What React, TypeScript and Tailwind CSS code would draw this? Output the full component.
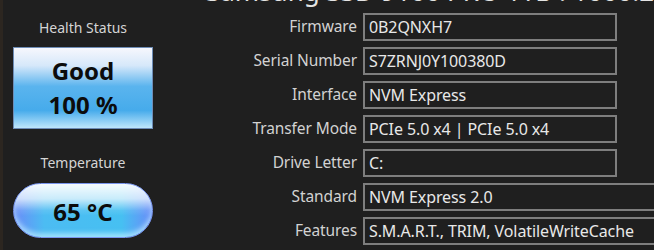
const rows = [
  { label: 'Firmware', value: '0B2QNXH7', wide: false },
  { label: 'Serial Number', value: 'S7ZRNJ0Y100380D', wide: false },
  { label: 'Interface', value: 'NVM Express', wide: false },
  { label: 'Transfer Mode', value: 'PCIe 5.0 x4 | PCIe 5.0 x4', wide: false },
  { label: 'Drive Letter', value: 'C:', wide: false },
  { label: 'Standard', value: 'NVM Express 2.0', wide: true },
  { label: 'Features', value: 'S.M.A.R.T., TRIM, VolatileWriteCache', wide: true },
];

function InfoRow({ label, value, wide }: { label: string; value: string; wide: boolean }) {
  return (
    <div className="flex h-[28px] items-center">
      <div className="w-[193px] pr-[6px] text-right text-[15.5px] tracking-[-0.1px] text-[#d2d2d2]">{label}</div>
      <div
        className={
          'flex h-[28px] shrink-0 items-center border-2 border-[#7e7e7e] px-[4px] text-[16px] tracking-[-0.1px] text-[#e8e8e8] ' +
          (wide ? 'w-[330px]' : 'w-[254px]')
        }
      >
        {value}
      </div>
    </div>
  );
}

export default function App() {
  return (
    <div
      className="flex h-[250px] w-[654px] overflow-hidden bg-[#1f1f1f]"
      style={{ fontFamily: '"Noto Sans", "Open Sans", sans-serif' }}
    >
      <div className="w-[3px] shrink-0 bg-[#2c2620]" />
      <div className="flex min-w-0 flex-1 flex-col">
        <div className="h-[13px] shrink-0 overflow-hidden">
          <div className="-mt-[24px] pl-[203px] text-[26px] leading-[30px] whitespace-nowrap text-[#e4e4e4]">
            Samsung SSD 9100 PRO 1TB : 1000.2 GB
          </div>
        </div>
        <div className="flex">
          <div className="flex w-[167px] shrink-0 flex-col items-start pl-[10px]">
            <div className="mt-[5px] h-[20px] w-[140px] text-center text-[14px] leading-[20px] text-[#d4d4d4]">
              Health Status
            </div>
            <div className="mt-[9px] flex h-[82px] w-[140px] flex-col items-center justify-center gap-[6px] border border-[#6d8cb6] bg-[linear-gradient(to_bottom,#f6f7fd_0%,#d6e8fa_22%,#5ab4ee_48%,#46abeb_78%,#bfe6fb_100%)] text-[24px] leading-[28px] font-bold text-[#0c0c0c]">
              <span>Good</span>
              <span>100 %</span>
            </div>
            <div className="mt-[24px] h-[20px] w-[140px] text-center text-[14px] leading-[20px] text-[#d4d4d4]">
              Temperature
            </div>
            <div className="mt-[10px] flex h-[55px] w-[140px] items-center justify-center rounded-full border border-[#7a96ee] bg-[linear-gradient(to_bottom,rgba(255,255,255,0.95)_0%,rgba(255,255,255,0.7)_28%,rgba(255,255,255,0.1)_50%,rgba(255,255,255,0)_60%),linear-gradient(to_right,#6a8cf8_0%,#4cbcf2_22%,#46c0f2_78%,#6a8cf8_100%)] pt-[2px] text-[24px] font-bold text-[#0c0c0c] shadow-[inset_0_-4px_5px_rgba(190,240,255,0.7)]">
              65 °C
            </div>
          </div>
          <div className="flex flex-col gap-[6px]">
            {rows.map((r) => (
              <InfoRow key={r.label} label={r.label} value={r.value} wide={r.wide} />
            ))}
          </div>
        </div>
      </div>
    </div>
  );
}
